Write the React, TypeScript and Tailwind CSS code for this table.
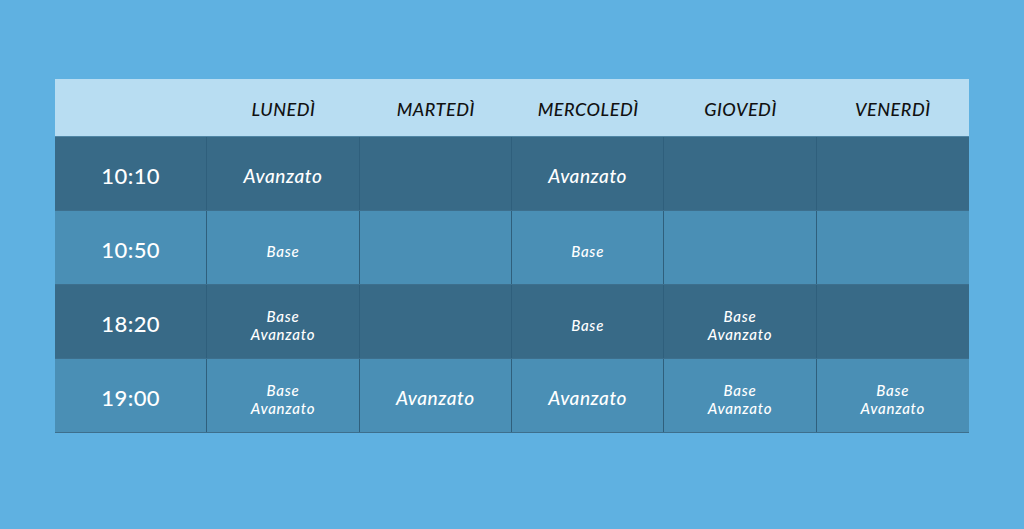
export default function App() {
  const days = ["LUNEDÌ", "MARTEDÌ", "MERCOLEDÌ", "GIOVEDÌ", "VENERDÌ"]
  const rows: { time: string; cells: string[][] }[] = [
    { time: "10:10", cells: [["Avanzato"], [], ["Avanzato"], [], []] },
    { time: "10:50", cells: [["Base"], [], ["Base"], [], []] },
    { time: "18:20", cells: [["Base", "Avanzato"], [], ["Base"], ["Base", "Avanzato"], []] },
    {
      time: "19:00",
      cells: [["Base", "Avanzato"], ["Avanzato"], ["Avanzato"], ["Base", "Avanzato"], ["Base", "Avanzato"]],
    },
  ]

  return (
    <div className="w-[1024px] h-[529px] bg-[#5fb1e1] pt-[79px] pl-[55px]" style={{ fontFamily: "Lato, 'Noto Sans', sans-serif" }}>
      <div className="w-[914px]">
        <div className="grid grid-cols-6 h-[58px] bg-[#b8ddf2] border-b border-[#4f86a6]">
          <div />
          {days.map((d) => (
            <div key={d} className="flex items-center justify-center text-[18px] tracking-[0.03em] italic font-medium text-[#111] pt-1">
              {d}
            </div>
          ))}
        </div>
        {rows.map((row, i) => (
          <div
            key={row.time}
            className={`grid grid-cols-6 h-[74px] border-b border-[#3d6f8d] ${i % 2 === 0 ? "bg-[#386a87]" : "bg-[#4a8fb5]"}`}
          >
            <div className="flex items-center justify-center border-r border-[#2f5f7c] text-white text-[22px] tracking-[0.02em] font-medium pt-1">
              {row.time}
            </div>
            {row.cells.map((c, j) => (
              <div
                key={j}
                className={`flex flex-col items-center justify-center text-white italic pt-[6px] ${j < 4 ? "border-r border-[#2f5f7c]" : ""} ${
                  c.length === 1 && c[0] === "Avanzato"
                    ? "text-[19px] tracking-[0.03em] font-medium"
                    : "text-[15px] leading-[18px] tracking-[0.05em] font-medium"
                }`}
              >
                {c.map((t) => (
                  <span key={t}>{t}</span>
                ))}
              </div>
            ))}
          </div>
        ))}
      </div>
    </div>
  )
}
